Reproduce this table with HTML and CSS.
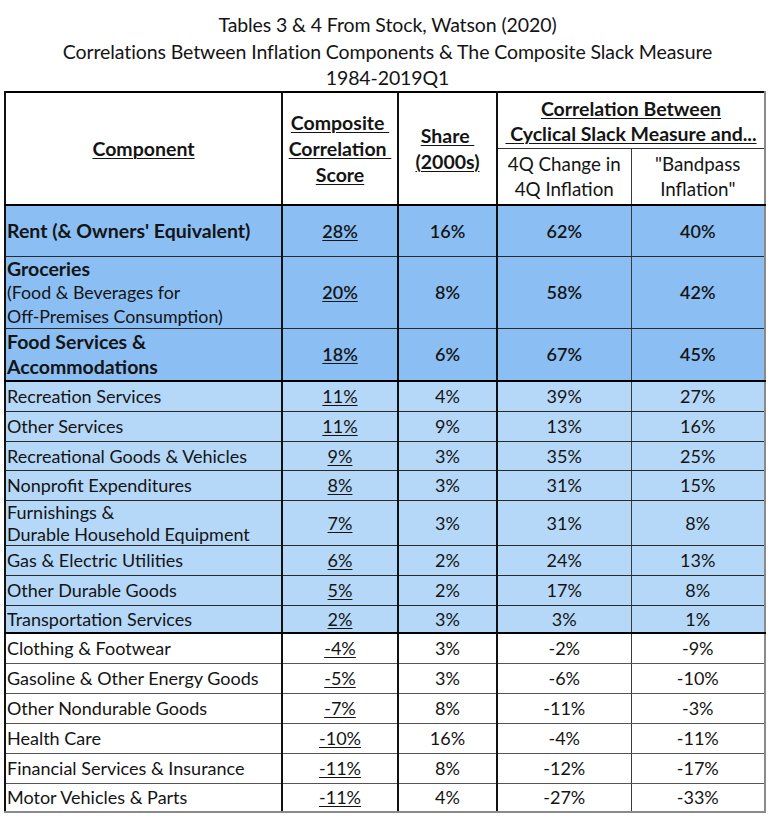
FILE: index.html
```html
<!DOCTYPE html>
<html>
<head>
<meta charset="utf-8">
<link rel="stylesheet" href="styles.css">
</head>
<body>
<div class="title">
  <div>Tables 3 &amp; 4 From Stock, Watson (2020)</div>
  <div>Correlations Between Inflation Components &amp; The Composite Slack Measure</div>
  <div>1984-2019Q1</div>
</div>
<table class="grid">
  <colgroup>
    <col class="c1"><col class="c2"><col class="c3"><col class="c4"><col class="c5">
  </colgroup>
  <thead>
    <tr class="h1">
      <th rowspan="2" class="name-h"><u>Component</u></th>
      <th rowspan="2" class="vb"><u>Composite&nbsp;</u><br><u>Correlation&nbsp;</u><br><u>Score</u></th>
      <th rowspan="2" class="vb"><u>Share&nbsp;</u><br><u>(2000s)</u></th>
      <th colspan="2" class="span-h"><u>Correlation Between</u><br><u>&nbsp;Cyclical Slack Measure and...</u></th>
    </tr>
    <tr class="h2">
      <th class="sub">4Q Change in<br>4Q Inflation</th>
      <th class="sub last">"Bandpass<br>Inflation"</th>
    </tr>
  </thead>
  <tbody>
    <tr class="top r-rent"><td class="name">Rent (&amp; Owners' Equivalent)</td><td class="score"><u>28%</u></td><td>16%</td><td>62%</td><td class="last">40%</td></tr>
    <tr class="top r-groc"><td class="name"><span class="big">Groceries</span><br><span class="small">(Food &amp; Beverages for<br>Off-Premises Consumption)</span></td><td class="score"><u>20%</u></td><td>8%</td><td>58%</td><td class="last">42%</td></tr>
    <tr class="top r-food sep"><td class="name">Food Services &amp;<br>Accommodations</td><td class="score"><u>18%</u></td><td>6%</td><td>67%</td><td class="last">45%</td></tr>
    <tr class="mid"><td class="name">Recreation Services</td><td class="score"><u>11%</u></td><td>4%</td><td>39%</td><td class="last">27%</td></tr>
    <tr class="mid"><td class="name">Other Services</td><td class="score"><u>11%</u></td><td>9%</td><td>13%</td><td class="last">16%</td></tr>
    <tr class="mid r29"><td class="name">Recreational Goods &amp; Vehicles</td><td class="score"><u>9%</u></td><td>3%</td><td>35%</td><td class="last">25%</td></tr>
    <tr class="mid"><td class="name">Nonprofit Expenditures</td><td class="score"><u>8%</u></td><td>3%</td><td>31%</td><td class="last">15%</td></tr>
    <tr class="mid r-two"><td class="name">Furnishings &amp;<br>Durable Household Equipment</td><td class="score"><u>7%</u></td><td>3%</td><td>31%</td><td class="last">8%</td></tr>
    <tr class="mid"><td class="name">Gas &amp; Electric Utilities</td><td class="score"><u>6%</u></td><td>2%</td><td>24%</td><td class="last">13%</td></tr>
    <tr class="mid"><td class="name">Other Durable Goods</td><td class="score"><u>5%</u></td><td>2%</td><td>17%</td><td class="last">8%</td></tr>
    <tr class="mid r28 sep"><td class="name">Transportation Services</td><td class="score"><u>2%</u></td><td>3%</td><td>3%</td><td class="last">1%</td></tr>
    <tr class="low"><td class="name">Clothing &amp; Footwear</td><td class="score"><u>-4%</u></td><td>3%</td><td>-2%</td><td class="last">-9%</td></tr>
    <tr class="low"><td class="name">Gasoline &amp; Other Energy Goods</td><td class="score"><u>-5%</u></td><td>3%</td><td>-6%</td><td class="last">-10%</td></tr>
    <tr class="low"><td class="name">Other Nondurable Goods</td><td class="score"><u>-7%</u></td><td>8%</td><td>-11%</td><td class="last">-3%</td></tr>
    <tr class="low"><td class="name">Health Care</td><td class="score"><u>-10%</u></td><td>16%</td><td>-4%</td><td class="last">-11%</td></tr>
    <tr class="low"><td class="name">Financial Services &amp; Insurance</td><td class="score"><u>-11%</u></td><td>8%</td><td>-12%</td><td class="last">-17%</td></tr>
    <tr class="low r29 bottom"><td class="name">Motor Vehicles &amp; Parts</td><td class="score"><u>-11%</u></td><td>4%</td><td>-27%</td><td class="last">-33%</td></tr>
  </tbody>
</table>
</body>
</html>
```

FILE: styles.css
```css
html, body {
  margin: 0;
  padding: 0;
  background: #ffffff;
}
body {
  font-family: Lato, "Open Sans", sans-serif;
  color: #141414;
}
.title {
  text-align: center;
  font-size: 19.5px;
  line-height: 26.5px;
  padding-top: 12px;
  height: 79px;
  box-sizing: content-box;
  letter-spacing: -0.1px;
}
.grid {
  margin-left: 4px;
  border-collapse: collapse;
  table-layout: fixed;
  width: 760px;
  border-top: 2px solid #000;
  border-left: 2px solid #111;
  border-right: 2px solid #8a8a8a;
  border-bottom: 2px solid #8a8a8a;
}
.c1 { width: 277px; }
.c2 { width: 116px; }
.c3 { width: 99px; }
.c4 { width: 134px; }
.c5 { width: 134px; }

th, td {
  padding: 0 3px;
  text-align: center;
  vertical-align: middle;
  border-left: 2px solid #111;
  border-top: 1px solid #2a2a2a;
  border-bottom: 1px solid #2a2a2a;
}
th.last, td.last {
  border-left: 1px solid #3a3a3a;
}
th {
  font-weight: 700;
  font-size: 19.5px;
  line-height: 26px;
}
th u, td u {
  text-decoration-thickness: 1px;
  text-underline-offset: 2px;
}
.h1 { height: 56px; }
.h1 th { border-bottom: 1px solid #333; }
.h2 { height: 57px; }
.h2 th { border-bottom: 2px solid #000; }
.h1 th.name-h, .h1 th.vb { border-bottom: 2px solid #000; }
.span-h { line-height: 25px; padding-top: 2px; }
.sub {
  font-weight: 400;
  font-size: 18.8px;
  line-height: 25px;
}

td {
  font-size: 18px;
  line-height: 22px;
}
td.name {
  text-align: left;
  padding-left: 1px;
  white-space: nowrap;
}
.top td { background: #8bbff4; font-weight: 600; }
.mid td { background: #b6d8f8; }
.low td { background: #ffffff; }
.top td.name { font-weight: 700; font-size: 19.5px; line-height: 25px; }

.r-rent { height: 51px; }
.r-groc { height: 72px; }
.r-groc td.name { line-height: 23px; }
.r-groc .big { font-size: 19.5px; }
.r-groc .small { font-weight: 400; font-size: 17.8px; }
.r-food { height: 53px; }
.mid, .low { height: 30px; }
.r29 { height: 29px; }
.r28 { height: 28px; }
.r-two { height: 45px; }
.r-two td { line-height: 22px; }
.sep td { border-bottom: 2px solid #000; }
.low td { border-top-color: #555; border-bottom-color: #555; }
.bottom td { border-bottom: 2px solid #8a8a8a; }
```
